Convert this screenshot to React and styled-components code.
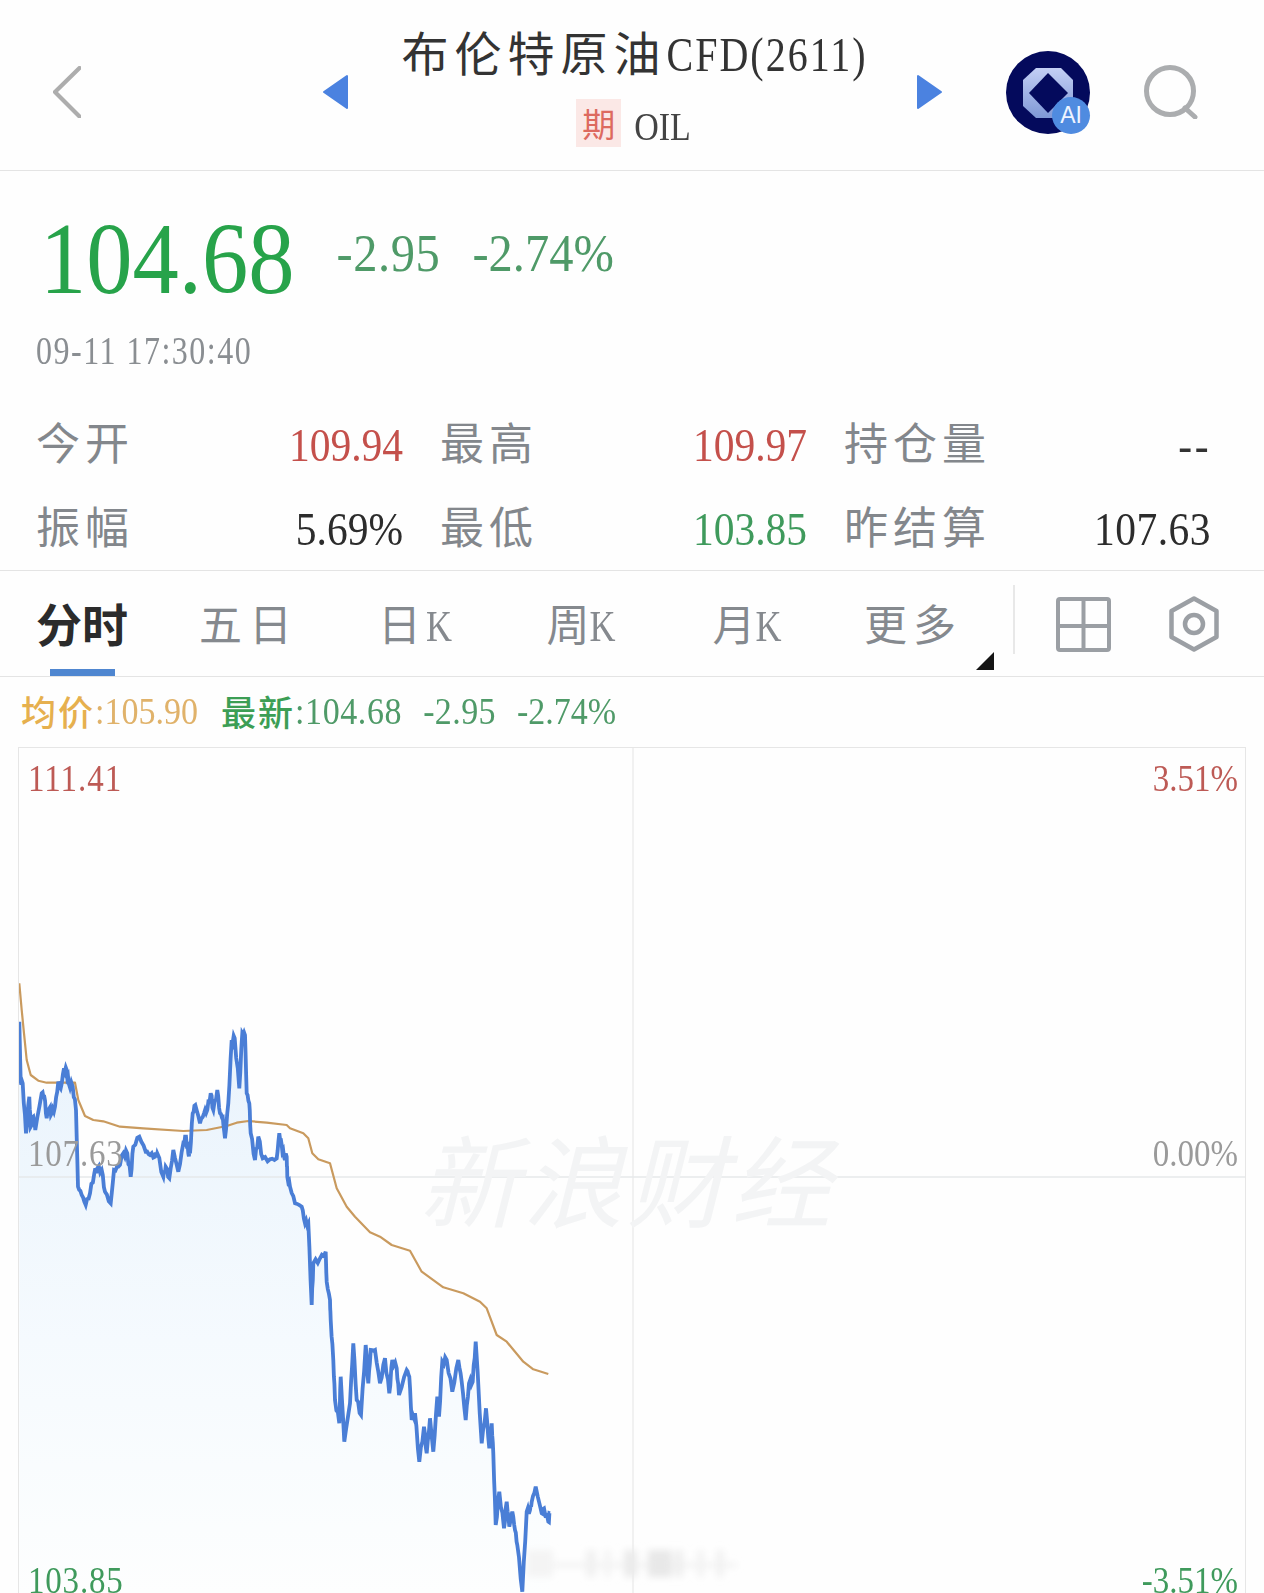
import React from 'react';
import styled, { createGlobalStyle } from 'styled-components';

const Global = createGlobalStyle`
  html, body { margin: 0; padding: 0; background: #fff; }
  body { font-family: "Liberation Serif", "Noto Sans CJK SC", serif; }
  * { box-sizing: border-box; }
`;

const Page = styled.div`
  width: 1264px;
  height: 1593px;
  overflow: hidden;
  background: #fefefe;
  display: flex;
  flex-direction: column;
`;

const Stretch = styled.span`
  display: inline-block;
  font-family: "Liberation Serif", serif;
  transform: scaleY(${p => p.$y || 1.15});
  letter-spacing: ${p => p.$ls || 0}px;
`;

/* Header */
const Header = styled.header`
  flex: 0 0 171px;
  padding-top: 14px;
  border-bottom: 1px solid #e4e4e4;
  display: grid;
  grid-template-columns: 53px 28px 241px 26px 569px 26px 63px 84px 54px 54px;
  align-items: center;
`;
const BackIcon = styled.svg` grid-column: 2; width: 28px; height: 52px; `;
const NavArrow = styled.svg` grid-column: ${p => p.$col}; width: 26px; height: 36px; `;
const TitleBlock = styled.div`
  grid-column: 5;
  align-self: start;
  margin-top: 9px;
  display: flex;
  flex-direction: column;
  align-items: center;
  padding-left: 4px;
`;
const Title = styled.h1`
  margin: 0 0 14px;
  height: 62px;
  display: flex;
  align-items: center;
  font-weight: 400;
  color: #333;
  white-space: nowrap;
`;
const TitleCjk = styled.span`
  font-family: "Noto Sans CJK SC", sans-serif;
  font-size: 47px;
  letter-spacing: 6px;
  margin-top: -7px;
`;
const TitleLatin = styled(Stretch)` font-size: 40px; `;
const SubRow = styled.div`
  display: flex;
  align-items: center;
  gap: 13px;
  padding-right: 2px;
`;
const TypeBadge = styled.span`
  width: 45px;
  height: 48px;
  background: #fbe8e6;
  color: #dd6a5f;
  font-family: "Noto Sans CJK SC", sans-serif;
  font-size: 33px;
  display: flex;
  align-items: center;
  justify-content: center;
`;
const Code = styled(Stretch)` font-size: 34px; color: #444; margin-top: 7px; `;
const AvatarWrap = styled.div`
  grid-column: 8;
  position: relative;
  width: 84px;
  height: 83px;
`;
const Avatar = styled.svg` display: block; width: 84px; height: 83px; `;
const AiBadge = styled.span`
  position: absolute;
  right: 0;
  bottom: 0;
  width: 38px;
  height: 37px;
  border-radius: 50%;
  background: #4f8be0;
  color: #eef4ff;
  font: 400 23px "Liberation Sans", sans-serif;
  display: flex;
  align-items: center;
  justify-content: center;
`;
const SearchIcon = styled.svg` grid-column: 10; width: 54px; height: 54px; `;

/* Quote */
const Quote = styled.section`
  flex: 0 0 400px;
  border-bottom: 1px solid #e4e4e4;
  display: flex;
  flex-direction: column;
`;
const PriceRow = styled.div`
  margin-top: 38px;
  height: 100px;
  padding-left: 40px;
  display: flex;
  align-items: center;
  color: #27a34a;
`;
const BigPrice = styled(Stretch)` font-size: 92.5px; margin-right: 42px; `;
const Change = styled(Stretch)`
  font-size: 48.5px;
  color: #4f9a68;
  margin-right: ${p => p.$mr || 0}px;
  margin-top: -14px;
`;
const TimeRow = styled.div`
  margin-top: 22px;
  height: 40px;
  padding-left: 36px;
  display: flex;
  align-items: center;
  color: #8a8e92;
`;
const TimeText = styled(Stretch)` font-size: 32px; `;
const Stats = styled.div`
  margin-top: 30px;
  padding: 0 54px 0 36px;
  display: grid;
  grid-template-columns: repeat(3, 1fr);
  grid-auto-rows: 84px;
  column-gap: 38px;
`;
const Stat = styled.div`
  display: flex;
  align-items: center;
  justify-content: space-between;
`;
const StatLabel = styled.span`
  font-family: "Noto Sans CJK SC", sans-serif;
  font-size: 44px;
  letter-spacing: 5px;
  color: #83878c;
  margin-bottom: 5px;
`;
const StatValue = styled(Stretch)`
  font-size: 41.5px;
  color: ${p => p.$c};
  margin: 3px -1px 0 0;
`;

/* Tabs */
const TabBar = styled.nav`
  flex: 0 0 106px;
  border-bottom: 1px solid #e4e4e4;
  display: flex;
  align-items: stretch;
`;
const Tab = styled.div`
  position: relative;
  flex: 0 0 166px;
  display: flex;
  align-items: center;
  justify-content: center;
  padding-bottom: 3px;
  padding-right: ${p => (p.$active ? 2 : 0)}px;
  font-family: "Noto Sans CJK SC", sans-serif;
  font-size: ${p => (p.$active ? 46 : 43)}px;
  font-weight: ${p => (p.$active ? 700 : 400)};
  color: ${p => (p.$active ? '#2b2b2b' : '#85898e')};
  letter-spacing: ${p => p.$ls || 0}px;
  white-space: nowrap;
`;
const TabLatin = styled(Stretch)`
  font-size: 36px;
  margin-left: ${p => p.$ml || 0}px;
  margin-top: 7px;
`;
const Indicator = styled.i`
  position: absolute;
  left: 50px;
  right: 51px;
  bottom: 0;
  height: 7px;
  background: #4f86d0;
`;
const MoreCorner = styled.i`
  position: absolute;
  right: 2px;
  bottom: 6px;
  width: 0;
  height: 0;
  border-left: 18px solid transparent;
  border-bottom: 18px solid #151515;
`;
const TabTools = styled.div`
  display: flex;
  align-items: center;
  margin-left: 17px;
`;
const Divider = styled.span`
  width: 2px;
  height: 69px;
  margin-top: -8px;
  background: #e8e8e8;
`;
const GridIcon = styled.svg` width: 55px; height: 55px; margin: 1px 57px 0 41px; `;
const GearIcon = styled.svg` width: 50px; height: 56px; margin: 1px 0 0 1px; `;

/* Legend */
const Legend = styled.div`
  flex: 0 0 70px;
  padding-left: 21px;
  display: flex;
  align-items: center;
  white-space: nowrap;
`;
const LegendCjk = styled.span`
  font-family: "Noto Sans CJK SC", sans-serif;
  font-size: 35px;
  font-weight: 500;
  letter-spacing: 2px;
  margin-top: -4px;
  color: ${p => p.$c};
`;
const LegendVal = styled(Stretch)`
  font-size: 34px;
  color: ${p => p.$c};
  margin-right: ${p => p.$mr || 0}px;
`;

/* Chart */
const Chart = styled.section`
  position: relative;
  flex: 1;
  margin: 0 18px;
  border: 1px solid #e6e6e6;
  border-bottom: 0;
  overflow: hidden;
`;
const ChartSvg = styled.svg`
  position: absolute;
  left: 0;
  top: 0;
  width: 1228px;
  height: 846px;
`;
const AxisLabel = styled(Stretch)`
  position: absolute;
  font-size: 33px;
  color: ${p => p.$c};
  ${p => (p.$right ? 'right: 7px;' : 'left: 9px;')}
  top: ${p => p.$top}px;
`;
const Watermark = styled.span`
  position: absolute;
  left: 400px;
  top: 356px;
  font-family: "Noto Sans CJK SC", sans-serif;
  font-size: 100px;
  font-weight: 400;
  font-style: italic;
  letter-spacing: 4px;
  color: #f3f4f5;
  white-space: nowrap;
`;

const page = (pts, x0, y0) => pts.map(([x, y]) => [x0 + x / 3, y0 + y / 3]);
const toStr = pts => pts.map(([x, y]) => `${x.toFixed(1)},${y.toFixed(1)}`).join(' ');
const jitter = pts => {
  const out = [];
  pts.forEach((p, i) => {
    out.push(p);
    const n = pts[i + 1];
    if (!n) return;
    [1 / 3, 2 / 3].forEach((t, k) => {
      const wave = Math.sin((i + 1) * 12.9898 + k * 78.233) * 3.2;
      out.push([p[0] + (n[0] - p[0]) * t, p[1] + (n[1] - p[1]) * t + wave]);
    });
  });
  return out;
};

const blue = [
  ...page([[58,185],[62,365],[68,370],[78,520],[88,410],[92,500],[100,470],[106,510],[125,400],[133,410],[140,475],[148,445],[155,460],[165,440],[175,365],[182,385],[192,325],[200,330],[206,370],[218,380],[228,450],[234,680],[245,705],[257,735],[270,700],[283,640],[292,625],[305,630],[315,695],[332,730],[342,630],[355,620],[370,580],[382,580],[392,650],[400,560],[418,530],[437,575],[450,585],[465,590],[472,580],[490,650],[497,620],[508,655],[520,570],[535,635],[550,550],[558,530],[565,580],[570,580],[578,460],[586,435],[600,490],[612,460],[622,450],[632,400],[640,450],[652,390],[660,460],[668,470],[675,535],[685,430],[695,240],[704,235],[718,385],[727,220],[735,225],[740,400],[748,430],[752,520],[765,600],[775,530],[788,595],[810,598],[830,595],[838,520]], 0, 960),
  ...page([[5,135],[12,170],[20,170],[22,230],[30,260],[45,310],[65,320],[75,370],[85,370],[95,615],[100,490],[120,475],[137,455],[140,545],[150,600]], 280, 1100),
  ...page([[92,0],[100,120],[105,240],[118,310],[122,170],[133,365],[150,250],[160,70],[170,240],[183,285],[197,75],[205,190],[212,90],[225,90],[240,190],[255,115],[268,220],[277,120],[290,145],[297,225],[320,150],[328,170],[335,300],[345,280],[358,425],[372,320],[380,400],[390,295],[400,395],[412,230],[417,290],[427,125],[440,120],[457,215],[475,120],[485,185],[497,300],[507,190],[518,185],[527,65],[545,370],[558,265],[568,385],[575,310],[580,400],[587,615],[598,515],[612,625],[620,545],[628,620],[637,575],[645,630],[652,675],[667,815],[680,575],[690,570],[695,545],[707,500],[725,580],[732,565],[745,605],[750,580]], 300, 1320),
];
const orange = [
  ...page([[58,70],[65,150],[72,220],[80,300],[92,345],[115,362],[140,368],[225,368],[235,420],[255,468],[280,480],[310,484],[360,500],[430,505],[550,513],[620,510],[680,498],[710,488],[745,483],[800,488]], 0, 960),
  ...page([[20,75],[30,85],[70,100],[85,115],[97,160],[115,178],[150,190],[170,265],[200,320],[225,350],[270,397],[300,410],[335,435],[390,452],[425,515],[490,562],[550,580],[600,605],[620,625],[650,705],[680,725],[730,785],[760,808],[805,822]], 280, 1100),
];
const fillPts = [...blue, [blue[blue.length - 1][0], 1593], [blue[0][0], 1593]];

const tabs = [
  { cjk: '分时', active: true },
  { cjk: '五日', ls: 7 },
  { cjk: '日', latin: 'K', ml: 5 },
  { cjk: '周', latin: 'K' },
  { cjk: '月', latin: 'K' },
  { cjk: '更多', ls: 6, more: true },
];

const statRows = [
  ['今开', '109.94', '#c4504b'],
  ['最高', '109.97', '#c4504b'],
  ['持仓量', '--', '#333', 2.5],
  ['振幅', '5.69%', '#2c2c2c'],
  ['最低', '103.85', '#3f9a5c'],
  ['昨结算', '107.63', '#2c2c2c', 0.5],
];

const axis = [
  { t: '111.41', c: '#bd5a55', top: 13, ls: 1 },
  { t: '3.51%', c: '#bd5a55', top: 13, right: true },
  { t: '107.63', c: '#9a9a9a', top: 388, ls: 0.8 },
  { t: '0.00%', c: '#9a9a9a', top: 388, right: true },
  { t: '103.85', c: '#3f9a5c', top: 815, ls: 0.8 },
  { t: '-3.51%', c: '#3f9a5c', top: 815, right: true },
];

const blurBars = [
  [527, 26, '#f4f4f4'],
  [586, 10, '#f1f1f1'],
  [604, 7, '#f4f4f4'],
  [624, 13, '#ebebeb'],
  [648, 24, '#e8e8e8'],
  [675, 8, '#eeeeee'],
  [697, 7, '#f3f3f3'],
  [716, 8, '#f2f2f2'],
];

export default function App() {
  return (
    <Page>
      <Global />
      <Header>
        <BackIcon viewBox="0 0 28 52">
          <path d="M26.5 2 L2 26 L26.5 50.5" fill="none" stroke="#adadad" strokeWidth="4.2" strokeLinecap="round" strokeLinejoin="round" />
        </BackIcon>
        <NavArrow $col={4} viewBox="0 0 26 36">
          <path d="M25 2 V34 L2 18 Z" fill="#4b82e0" stroke="#4b82e0" strokeWidth="2" strokeLinejoin="round" />
        </NavArrow>
        <TitleBlock>
          <Title>
            <TitleCjk>布伦特原油</TitleCjk>
            <TitleLatin $y={1.2} $ls={2}>CFD(2611)</TitleLatin>
          </Title>
          <SubRow>
            <TypeBadge>期</TypeBadge>
            <Code $y={1.2}>OIL</Code>
          </SubRow>
        </TitleBlock>
        <NavArrow $col={6} viewBox="0 0 26 36">
          <path d="M1 2 V34 L24 18 Z" fill="#4b82e0" stroke="#4b82e0" strokeWidth="2" strokeLinejoin="round" />
        </NavArrow>
        <AvatarWrap>
          <Avatar viewBox="0 0 84 83">
            <defs>
              <linearGradient id="ring" x1="0" y1="0" x2="0" y2="1">
                <stop offset="0" stopColor="#c3cff5" />
                <stop offset="1" stopColor="#7f98d6" />
              </linearGradient>
            </defs>
            <ellipse cx="42" cy="41.5" rx="42" ry="41.5" fill="#040a5c" />
            <path d="M30 17 H55 L67 29 V55 L55 67 H30 L17 55 V29 Z" fill="url(#ring)" />
            <path d="M42 22 L62 42 L42 62 L23 42 Z" fill="#040a5c" />
          </Avatar>
          <AiBadge>AI</AiBadge>
        </AvatarWrap>
        <SearchIcon viewBox="0 0 54 54">
          <circle cx="26" cy="26" r="23.5" fill="none" stroke="#abadaf" strokeWidth="5" />
          <path d="M41 43 L51 52" stroke="#abadaf" strokeWidth="5" strokeLinecap="round" />
        </SearchIcon>
      </Header>

      <Quote>
        <PriceRow>
          <BigPrice $y={1.1}>104.68</BigPrice>
          <Change $y={1.1} $mr={32} $ls={0.6}>-2.95</Change>
          <Change $y={1.1}>-2.74%</Change>
        </PriceRow>
        <TimeRow>
          <TimeText $y={1.22} $ls={1.5}>09-11 17:30:40</TimeText>
        </TimeRow>
        <Stats>
          {statRows.map(([label, value, color, ls]) => (
            <Stat key={label}>
              <StatLabel>{label}</StatLabel>
              <StatValue $c={color} $y={1.12} $ls={ls}>{value}</StatValue>
            </Stat>
          ))}
        </Stats>
      </Quote>

      <TabBar>
        {tabs.map(t => (
          <Tab key={t.cjk} $active={t.active} $ls={t.ls}>
            {t.cjk}
            {t.latin && <TabLatin $ml={t.ml} $y={1.22}>{t.latin}</TabLatin>}
            {t.active && <Indicator />}
            {t.more && <MoreCorner />}
          </Tab>
        ))}
        <TabTools>
          <Divider />
          <GridIcon viewBox="0 0 55 55">
            <rect x="2" y="2" width="51" height="51" rx="2" fill="none" stroke="#9b9fa4" strokeWidth="4" />
            <path d="M27.5 2 V53 M2 29 H53" stroke="#9b9fa4" strokeWidth="4" />
          </GridIcon>
          <GearIcon viewBox="0 0 50 56">
            <path d="M25 2.5 L47.5 15 V41 L25 53.5 L2.5 41 V15 Z" fill="none" stroke="#9b9fa4" strokeWidth="4.5" strokeLinejoin="round" />
            <circle cx="25" cy="28" r="9" fill="none" stroke="#9b9fa4" strokeWidth="4.5" />
          </GearIcon>
        </TabTools>
      </TabBar>

      <Legend>
        <LegendCjk $c="#e6b04e">均价</LegendCjk>
        <LegendVal $c="#e0b26a" $y={1.1} $mr={23}>:105.90</LegendVal>
        <LegendCjk $c="#3c9e55">最新</LegendCjk>
        <LegendVal $c="#4f9a68" $y={1.1} $ls={0.6} $mr={21}>:104.68</LegendVal>
        <LegendVal $c="#4f9a68" $y={1.1} $ls={0.4} $mr={21}>-2.95</LegendVal>
        <LegendVal $c="#4f9a68" $y={1.1}>-2.74%</LegendVal>
      </Legend>

      <Chart>
        <ChartSvg viewBox="19 748 1228 846">
          <defs>
            <linearGradient id="area" x1="0" y1="1030" x2="0" y2="1593" gradientUnits="userSpaceOnUse">
              <stop offset="0" stopColor="#e9f3fc" />
              <stop offset="0.55" stopColor="#f5fafe" />
              <stop offset="1" stopColor="#fdfefe" />
            </linearGradient>
            <filter id="soft" x="-20%" y="-60%" width="140%" height="220%">
              <feGaussianBlur stdDeviation="3.5" />
            </filter>
          </defs>
          <path d="M633 748 V1593" stroke="#ececec" strokeWidth="1.5" />
          <polygon points={toStr(fillPts)} fill="url(#area)" />
          <path d="M19 1177 H1247" stroke="#e6e8ea" strokeWidth="1.5" />
          <polyline points={toStr(orange)} fill="none" stroke="#c99a5e" strokeWidth="2.2" strokeLinejoin="round" />
          <g filter="url(#soft)">
            <rect x="527" y="1563" width="210" height="4" fill="#f0f0f0" />
            {blurBars.map(([x, w, c]) => (
              <rect key={x} x={x} y="1550" width={w} height="27" fill={c} />
            ))}
          </g>
          <polyline points={toStr(jitter(blue))} fill="none" stroke="#4a7ed6" strokeWidth="3.8" strokeLinejoin="miter" />
        </ChartSvg>
        <Watermark>新浪财经</Watermark>
        {axis.map(a => (
          <AxisLabel key={a.t} $c={a.c} $top={a.top} $right={a.right} $ls={a.ls} $y={1.12}>{a.t}</AxisLabel>
        ))}
      </Chart>
    </Page>
  );
}
